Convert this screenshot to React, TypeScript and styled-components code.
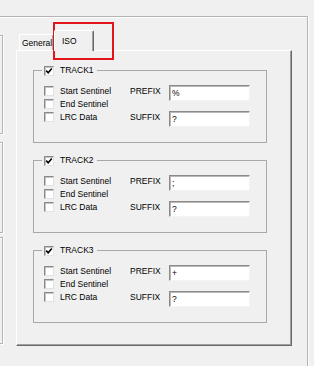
import React, { FunctionComponent } from "react";
import styled, { createGlobalStyle } from "styled-components";

const GlobalStyle = createGlobalStyle`
  html, body {
    margin: 0;
    padding: 0;
    background: #f0f0f0;
  }
  body {
    font-family: "Liberation Sans", Arial, sans-serif;
    font-size: 8.5px;
    color: #000;
  }
`;

const tracks = [
  { name: "TRACK1", prefix: "%", suffix: "?" },
  { name: "TRACK2", prefix: ";", suffix: "?" },
  { name: "TRACK3", prefix: "+", suffix: "?" },
];

const options = ["Start Sentinel", "End Sentinel", "LRC Data"];

const Check: FunctionComponent<{ checked?: boolean }> = ({ checked }) => (
  <CheckBox>
    {checked && (
      <svg width="8" height="8" viewBox="0 0 8 8">
        <path d="M1.2 3.6 L3.2 5.8 L6.8 1.4" fill="none" stroke="#000" strokeWidth="1.6" />
      </svg>
    )}
  </CheckBox>
);

const App: FunctionComponent = () => (
  <Screen>
    <GlobalStyle />
    <OuterFrame>
      <LeftColumn>
        <CutBox $top={18} $height={99} />
        <CutBox $top={8} $height={91} />
        <CutBox $top={4} $height={107} />
      </LeftColumn>
      <TabArea>
        <TabStrip>
          <Tab>General</Tab>
          <Tab $active>ISO</Tab>
        </TabStrip>
        <Panel>
          {tracks.map((track) => (
            <Group key={track.name}>
              <GroupLegend>
                <Check checked />
                <span>{track.name}</span>
              </GroupLegend>
              <GroupBody>
                <CheckColumn>
                  {options.map((opt) => (
                    <CheckRow key={opt}>
                      <Check />
                      <span>{opt}</span>
                    </CheckRow>
                  ))}
                </CheckColumn>
                <FieldColumn>
                  <FieldRow>
                    <FieldLabel>PREFIX</FieldLabel>
                    <TextBox readOnly defaultValue={track.prefix} />
                  </FieldRow>
                  <FieldRow>
                    <FieldLabel>SUFFIX</FieldLabel>
                    <TextBox readOnly defaultValue={track.suffix} />
                  </FieldRow>
                </FieldColumn>
              </GroupBody>
            </Group>
          ))}
        </Panel>
      </TabArea>
    </OuterFrame>
    <Highlight />
  </Screen>
);

export default App;

const Screen = styled.div`
  position: relative;
  width: 314px;
  height: 366px;
  overflow: hidden;
  padding-top: 16px;
  box-sizing: border-box;
  background: #f0f0f0;
`;

const OuterFrame = styled.div`
  display: flex;
  width: 308px;
  height: 350px;
  box-sizing: border-box;
  border-top: 1px solid #b4b4b4;
  border-right: 1px solid #b4b4b4;
  box-shadow: inset 0 1px 0 #fff, 1px 0 0 #fff;
`;

const LeftColumn = styled.div`
  display: flex;
  flex-direction: column;
  width: 3px;
  flex-shrink: 0;
`;

const CutBox = styled.div<{ $top: number; $height: number }>`
  margin-top: ${({ $top }) => $top}px;
  height: ${({ $height }) => $height}px;
  box-sizing: border-box;
  border: 1px solid #b4b4b4;
  border-left: none;
  box-shadow: 1px 1px 0 #fff, inset 0 1px 0 #fff;
`;

const TabArea = styled.div`
  margin-left: 13px;
  width: 276px;
  display: flex;
  flex-direction: column;
`;

const TabStrip = styled.div`
  display: flex;
  align-items: flex-end;
  height: 33px;
  padding-left: 3px;
  box-sizing: border-box;
`;

const Tab = styled.div<{ $active?: boolean }>`
  position: relative;
  z-index: ${({ $active }) => ($active ? 1 : 0)};
  width: ${({ $active }) => ($active ? 40 : 35)}px;
  height: ${({ $active }) => ($active ? 21 : 16)}px;
  margin-bottom: ${({ $active }) => ($active ? -1 : 0)}px;
  padding-left: ${({ $active }) => ($active ? 7 : 2)}px;
  box-sizing: border-box;
  display: flex;
  align-items: center;
  background: #f0f0f0;
  border-top: 1px solid #fff;
  border-left: 1px solid #fff;
  border-right: 1px solid #696969;
  box-shadow: inset -1px 0 0 #a0a0a0;
  border-radius: 2px 2px 0 0;
  white-space: nowrap;
`;

const Panel = styled.div`
  height: 296px;
  box-sizing: border-box;
  padding: 14px 0 0 16px;
  border-top: 1px solid #fff;
  border-left: 1px solid #fff;
  border-right: 1px solid #696969;
  border-bottom: 1px solid #696969;
  box-shadow: inset -1px -1px 0 #a0a0a0;
  display: flex;
  flex-direction: column;
  gap: 12px;
`;

const Group = styled.fieldset`
  margin: 0;
  width: 234px;
  box-sizing: border-box;
  padding: 0 16px 15px 10px;
  border: 1px solid #a8a8a8;
  min-inline-size: 0;
`;

const GroupLegend = styled.legend`
  display: flex;
  align-items: center;
  gap: 6px;
  margin-left: -2px;
  padding: 0 3px 0 2px;
  height: 11px;
  line-height: 11px;
`;

const GroupBody = styled.div`
  display: flex;
  padding-top: 8px;
`;

const CheckColumn = styled.div`
  display: flex;
  flex-direction: column;
  width: 86px;
`;

const CheckRow = styled.div`
  display: flex;
  align-items: center;
  gap: 6px;
  height: 13px;
  white-space: nowrap;
`;

const CheckBox = styled.span`
  display: inline-flex;
  align-items: center;
  justify-content: center;
  width: 10px;
  height: 10px;
  box-sizing: border-box;
  flex-shrink: 0;
  background: #fff;
  border: 1px solid;
  border-color: #8a8a8a #e2e2e2 #e2e2e2 #8a8a8a;
  box-shadow: inset 1px 1px 0 #c4c4c4;
`;

const FieldColumn = styled.div`
  display: flex;
  flex-direction: column;
  gap: 10px;
  margin-top: 1px;
`;

const FieldRow = styled.div`
  display: flex;
  height: 16px;
`;

const FieldLabel = styled.span`
  width: 39px;
  line-height: 13px;
`;

const TextBox = styled.input`
  width: 81px;
  height: 16px;
  box-sizing: border-box;
  margin: 0;
  padding: 0 0 0 2px;
  font-family: "Liberation Sans", Arial, sans-serif;
  font-size: 8.5px;
  color: #000;
  background: #fff;
  border: 1px solid;
  border-color: #8a8a8a #f4f4f4 #f4f4f4 #8a8a8a;
  box-shadow: inset 1px 1px 0 #b8b8b8;
  outline: none;
`;

const Highlight = styled.div`
  position: absolute;
  left: 53px;
  top: 22px;
  width: 61px;
  height: 38px;
  box-sizing: border-box;
  border: 2px solid #e3151a;
  pointer-events: none;
`;
